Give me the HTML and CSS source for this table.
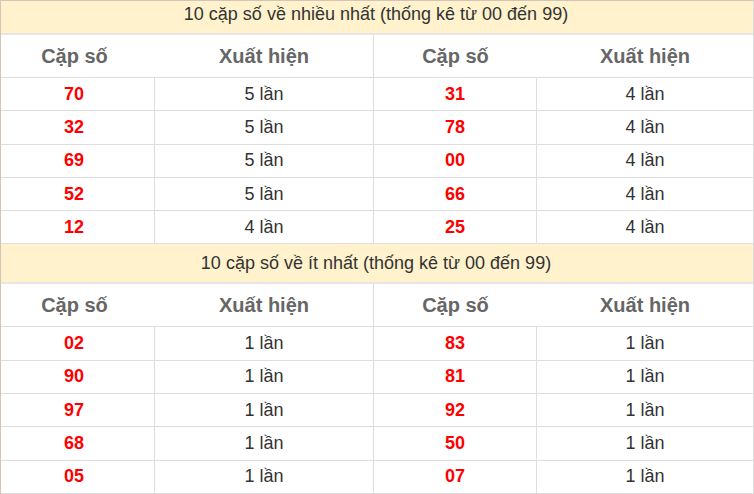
FILE: index.html
```html
<!DOCTYPE html>
<html lang="vi">
<head>
<meta charset="utf-8">
<title>Thống kê cặp số</title>
<link rel="stylesheet" href="styles.css">
</head>
<body>
<div class="board">
  <div class="title title-first">10 cặp số về nhiều nhất (thống kê từ 00 đến 99)</div>
  <div class="row head">
    <div class="cell">Cặp số</div><div class="cell sep">Xuất hiện</div><div class="cell">Cặp số</div><div class="cell">Xuất hiện</div>
  </div>
  <div class="row"><div class="cell num">70</div><div class="cell">5 lần</div><div class="cell num">31</div><div class="cell">4 lần</div></div>
  <div class="row"><div class="cell num">32</div><div class="cell">5 lần</div><div class="cell num">78</div><div class="cell">4 lần</div></div>
  <div class="row"><div class="cell num">69</div><div class="cell">5 lần</div><div class="cell num">00</div><div class="cell">4 lần</div></div>
  <div class="row"><div class="cell num">52</div><div class="cell">5 lần</div><div class="cell num">66</div><div class="cell">4 lần</div></div>
  <div class="row"><div class="cell num">12</div><div class="cell">4 lần</div><div class="cell num">25</div><div class="cell">4 lần</div></div>

  <div class="title">10 cặp số về ít nhất (thống kê từ 00 đến 99)</div>
  <div class="row head">
    <div class="cell">Cặp số</div><div class="cell sep">Xuất hiện</div><div class="cell">Cặp số</div><div class="cell">Xuất hiện</div>
  </div>
  <div class="row"><div class="cell num">02</div><div class="cell">1 lần</div><div class="cell num">83</div><div class="cell">1 lần</div></div>
  <div class="row"><div class="cell num">90</div><div class="cell">1 lần</div><div class="cell num">81</div><div class="cell">1 lần</div></div>
  <div class="row"><div class="cell num">97</div><div class="cell">1 lần</div><div class="cell num">92</div><div class="cell">1 lần</div></div>
  <div class="row"><div class="cell num">68</div><div class="cell">1 lần</div><div class="cell num">50</div><div class="cell">1 lần</div></div>
  <div class="row"><div class="cell num">05</div><div class="cell">1 lần</div><div class="cell num">07</div><div class="cell">1 lần</div></div>
</div>
</body>
</html>
```
FILE: styles.css
```css
* { box-sizing: border-box; }
html, body { margin: 0; padding: 0; background: #fff; }
body {
  font-family: "Liberation Sans", Arial, sans-serif;
  color: #333;
  width: 754px;
  height: 494px;
  overflow: hidden;
}
.board {
  width: 754px;
  border-left: 1px solid #d2c5b7;
  border-top: 1px solid #d2c5b7;
  border-right: 1px solid #ddd;
}
.title {
  height: 40px;
  background: #fff2cc;
  border-bottom: 2px solid #e6e6e6;
  font-size: 18px;
  display: flex;
  align-items: center;
  justify-content: center;
  padding-right: 2px;
}
.title-first {
  height: 34px;
  padding-bottom: 6px;
}
.row {
  display: grid;
  grid-template-columns: 154px 219px 163px 1fr;
  height: 33.3px;
  border-bottom: 1px solid #dedede;
}
.row .cell {
  display: flex;
  align-items: center;
  justify-content: center;
  font-size: 18px;
  border-right: 1px solid #dedede;
}
.row .cell:first-child { padding-right: 7px; }
.row .cell:last-child { border-right: none; }
.row.head { height: 43px; }
.row.head .cell {
  border-right: none;
  font-size: 20px;
  font-weight: bold;
  color: #666;
}
.row.head .cell.sep { border-right: 1px solid #dedede; }
.num {
  color: #f00;
  font-weight: bold;
}
```
